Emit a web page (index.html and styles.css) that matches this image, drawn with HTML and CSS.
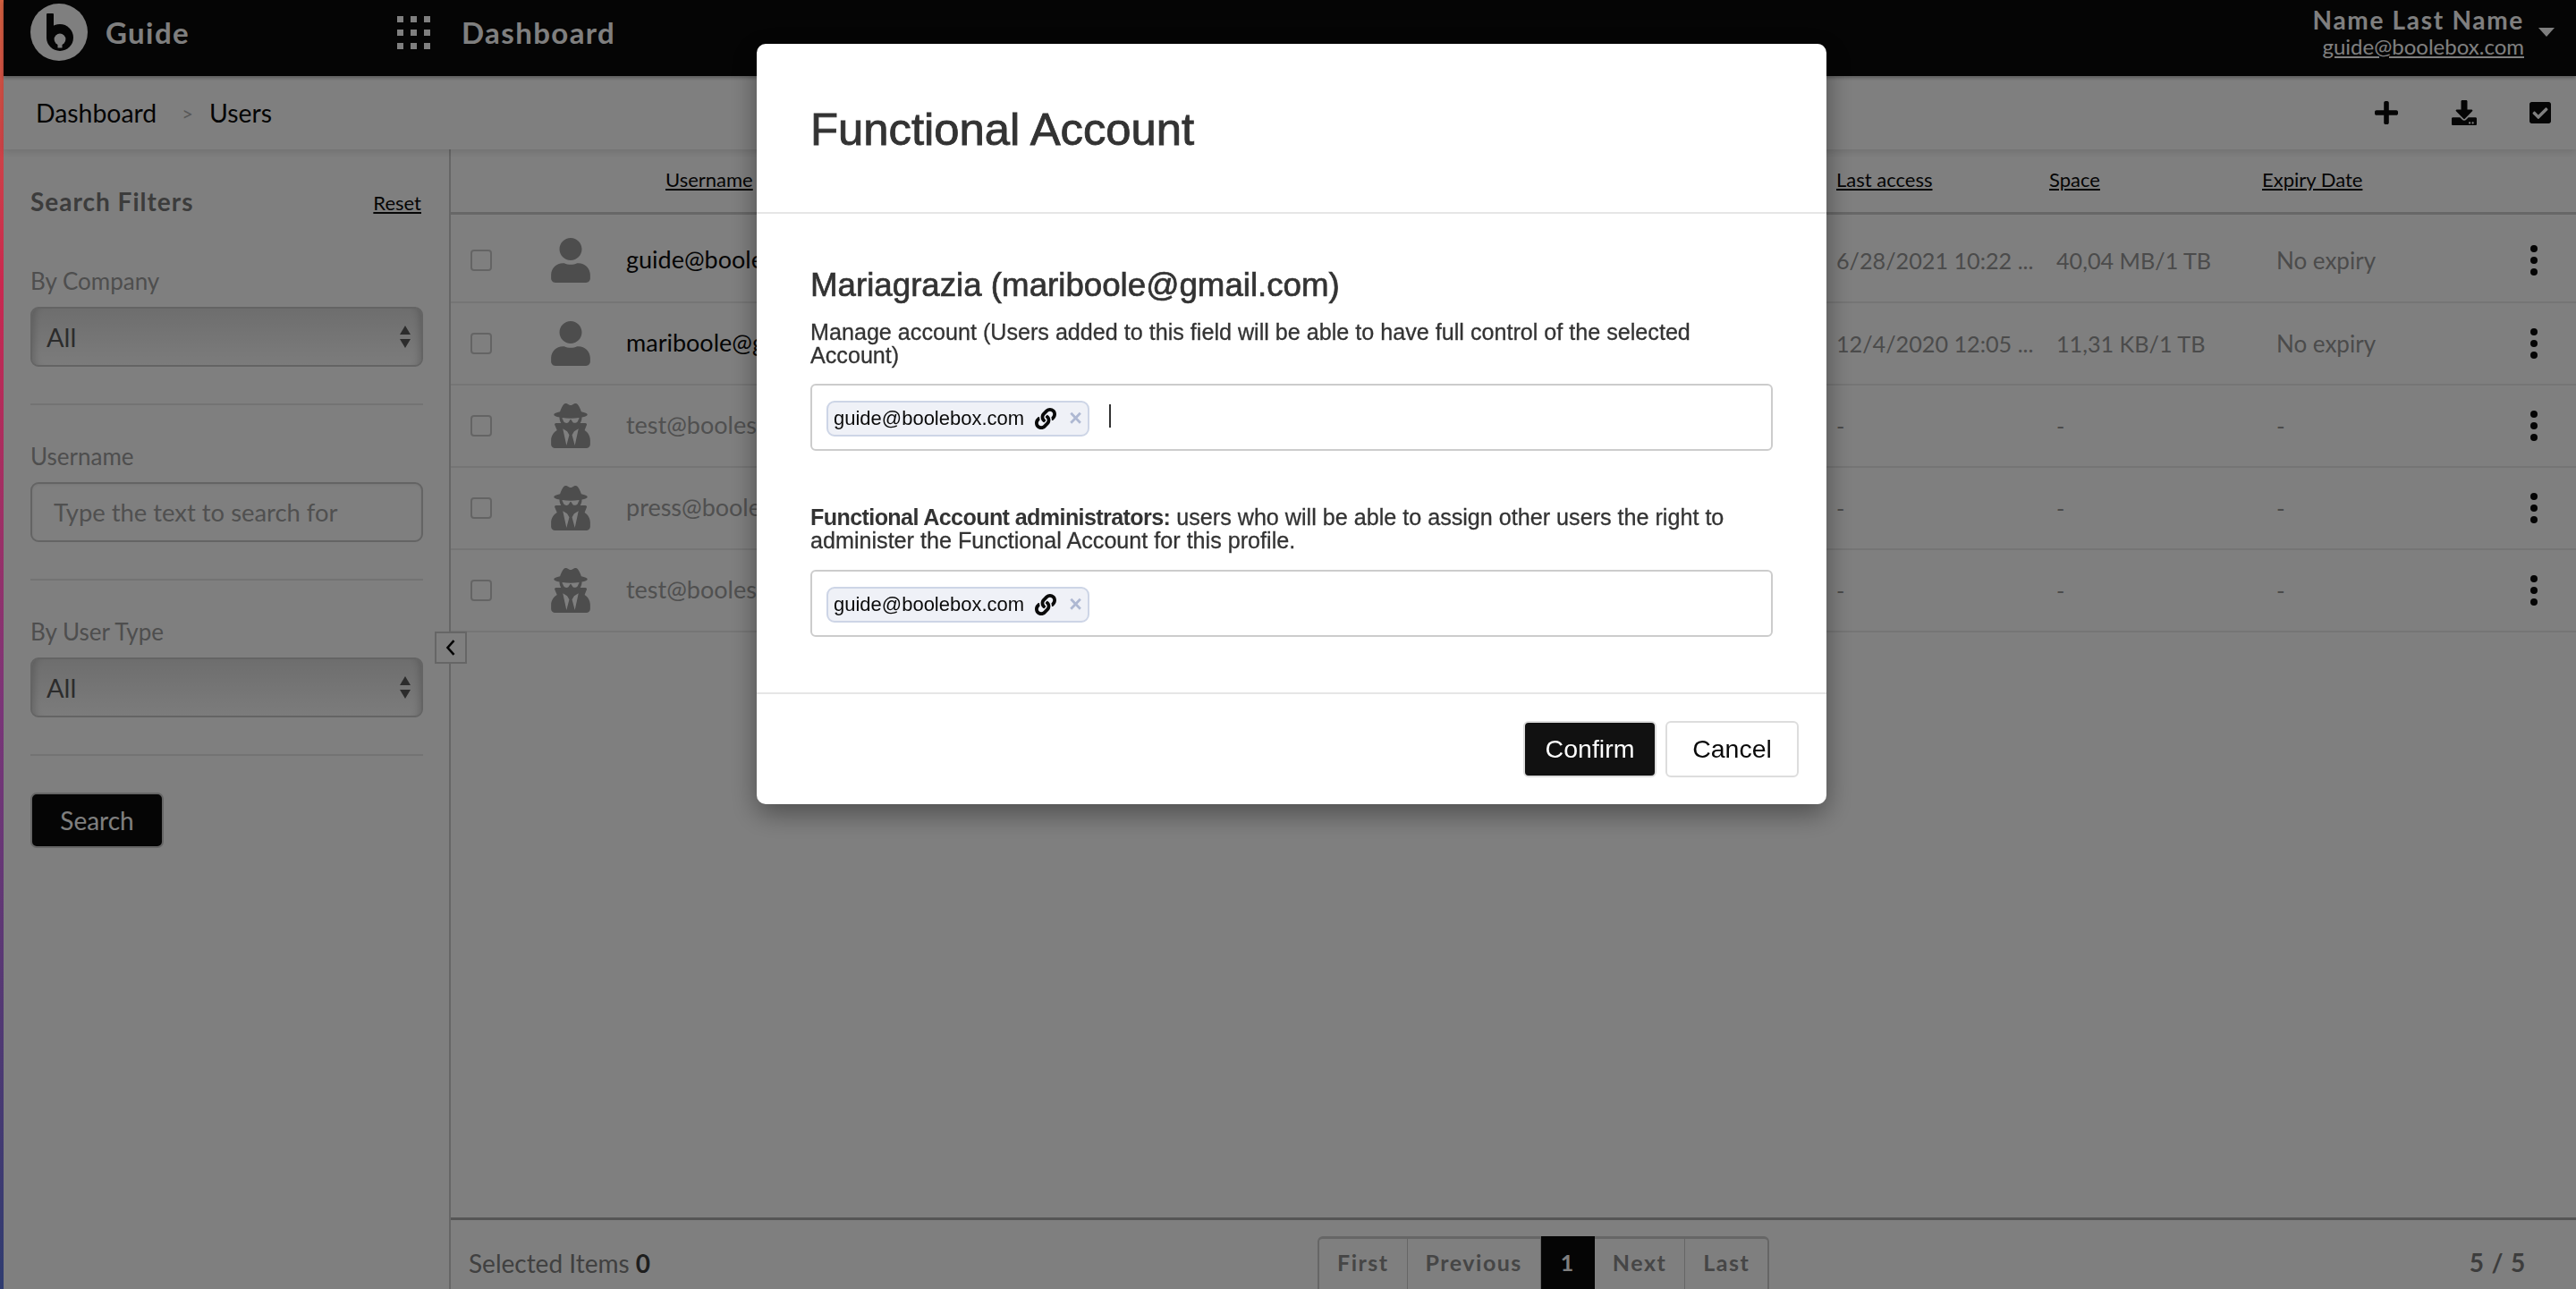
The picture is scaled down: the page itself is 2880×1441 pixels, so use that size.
FILE: index.html
```html
<!DOCTYPE html>
<html lang="en">
<head>
  <meta charset="UTF-8" />
  <title>Users - Guide</title>
  <link rel="stylesheet" href="styles.css">
</head>
<body>
  <svg class="icon-defs" aria-hidden="true">
    <symbol id="i-user" viewBox="0 0 448 512"><path d="M224 256c70.7 0 128-57.3 128-128S294.7 0 224 0 96 57.3 96 128s57.3 128 128 128zm89.6 32h-16.7c-22.2 10.2-46.9 16-72.9 16s-50.6-5.8-72.9-16h-16.7C60.2 288 0 348.2 0 422.4V464c0 26.5 21.5 48 48 48h352c26.5 0 48-21.5 48-48v-41.6c0-74.2-60.2-134.4-134.4-134.4z"/></symbol>
    <symbol id="i-secret" viewBox="0 0 448 512"><path d="M383.9 308.3l23.9-62.6c4-10.5-3.7-21.7-15-21.7h-58.5c11-18.9 17.8-40.6 17.8-64v-.3c39.2-7.8 64-19.1 64-31.7 0-13.3-27.3-25.1-70.1-33-9.2-32.8-27-65.8-40.6-82.8-9.5-11.9-25.9-15.6-39.5-8.8l-27.6 13.8c-9 4.5-19.6 4.5-28.6 0L182.1 3.4c-13.6-6.8-30-3.1-39.5 8.8-13.5 17-31.4 50-40.6 82.8-42.7 7.9-70 19.7-70 33 0 12.6 24.8 23.9 64 31.7v.3c0 23.4 6.8 45.1 17.8 64H56.3c-11.5 0-19.2 11.7-14.7 22.3l25.8 60.2C27.3 329.8 0 372.7 0 422.4v44.8C0 491.9 20.1 512 44.8 512h358.4c24.7 0 44.8-20.1 44.8-44.8v-44.8c0-48.4-25.8-90.4-64.1-114.1zM176 480l-41.6-192 49.6 32 24 40-32 120zm96 0l-32-120 24-40 49.6-32L272 480zm41.7-298.5c-3.9 11.9-7 24.6-16.5 33.4-10.1 9.3-48 22.4-64-25-2.8-8.4-15.4-8.4-18.3 0-17 50.2-56 32.4-64 25-9.5-8.8-12.7-21.5-16.5-33.4-.8-2.5-6.3-5.7-6.3-5.8v-10.8c28.3 3.6 61 5.8 96 5.8s67.7-2.1 96-5.8v10.8c-.1.1-5.6 3.2-6.4 5.8z"/></symbol>
    <symbol id="i-link" viewBox="0 0 512 512"><path d="M326.612 185.391c59.747 59.809 58.927 155.698.36 214.59-.11.12-.24.25-.36.37l-67.2 67.2c-59.27 59.27-155.699 59.262-214.96 0-59.27-59.26-59.27-155.7 0-214.96l37.106-37.106c9.84-9.84 26.786-3.3 27.294 10.606.648 17.722 3.826 35.527 9.69 52.721 1.986 5.822.567 12.262-3.783 16.612l-13.087 13.087c-28.026 28.026-28.905 73.66-1.155 101.96 28.024 28.579 74.086 28.749 102.325.51l67.2-67.19c28.191-28.191 28.073-73.757 0-101.83-3.701-3.694-7.429-6.564-10.341-8.569a16.037 16.037 0 0 1-6.947-12.606c-.396-10.567 3.348-21.456 11.698-29.806l21.054-21.055c5.521-5.521 14.182-6.199 20.584-1.731a152.482 152.482 0 0 1 20.522 17.197zM467.547 44.449c-59.261-59.262-155.69-59.27-214.96 0l-67.2 67.2c-.12.12-.25.25-.36.37-58.566 58.892-59.387 154.781.36 214.59a152.454 152.454 0 0 0 20.521 17.196c6.402 4.468 15.064 3.789 20.584-1.731l21.054-21.055c8.35-8.35 12.094-19.239 11.698-29.806a16.037 16.037 0 0 0-6.947-12.606c-2.912-2.005-6.64-4.875-10.341-8.569-28.073-28.073-28.191-73.639 0-101.83l67.2-67.19c28.239-28.239 74.3-28.069 102.325.51 27.75 28.3 26.872 73.934-1.155 101.96l-13.087 13.087c-4.35 4.35-5.769 10.79-3.783 16.612 5.864 17.194 9.042 34.999 9.69 52.721.509 13.906 17.454 20.446 27.294 10.606l37.106-37.106c59.271-59.259 59.271-155.699.001-214.959z"/></symbol>
    <symbol id="i-plus" viewBox="0 0 448 512"><path d="M416 208H272V64c0-17.67-14.33-32-32-32h-32c-17.67 0-32 14.33-32 32v144H32c-17.67 0-32 14.33-32 32v32c0 17.67 14.33 32 32 32h144v144c0 17.67 14.33 32 32 32h32c17.67 0 32-14.33 32-32V304h144c17.67 0 32-14.33 32-32v-32c0-17.67-14.33-32-32-32z"/></symbol>
    <symbol id="i-download" viewBox="0 0 512 512"><path d="M216 0h80c13.3 0 24 10.7 24 24v168h87.7c17.8 0 26.7 21.5 14.1 34.1L269.7 378.3c-7.5 7.5-19.8 7.5-27.3 0L90.1 226.1c-12.6-12.6-3.7-34.1 14.1-34.1H192V24c0-13.3 10.7-24 24-24zm296 376v112c0 13.3-10.7 24-24 24H24c-13.3 0-24-10.7-24-24V376c0-13.3 10.7-24 24-24h146.7l49 49c20.1 20.1 52.5 20.1 72.6 0l49-49H488c13.3 0 24 10.7 24 24zm-124 88c0-11-9-20-20-20s-20 9-20 20 9 20 20 20 20-9 20-20zm64 0c0-11-9-20-20-20s-20 9-20 20 9 20 20 20 20-9 20-20z"/></symbol>
    <symbol id="i-check" viewBox="0 0 448 512"><path d="M400 480H48c-26.51 0-48-21.49-48-48V80c0-26.51 21.49-48 48-48h352c26.51 0 48 21.49 48 48v352c0 26.51-21.49 48-48 48zm-204.686-98.059l184-184c6.248-6.248 6.248-16.379 0-22.627l-22.627-22.627c-6.248-6.248-16.379-6.249-22.628 0L184 302.745l-69.059-69.059c-6.248-6.248-16.379-6.248-22.628 0L69.686 256.314c-6.248 6.248-6.248 16.379 0 22.627l104 104c6.249 6.25 16.379 6.25 22.628.001z"/></symbol>
  </svg>

  <div class="strip"></div>
  <div class="page">
    <header class="topbar">
      <div class="brand">
        <svg class="logo" viewBox="0 0 64 64">
          <circle cx="32" cy="32" r="32" fill="#fff"/>
          <rect x="18" y="11" width="8" height="28" rx="1" fill="#0a0a0a"/>
          <circle cx="33" cy="38" r="15" fill="#0a0a0a"/>
          <circle cx="33" cy="40" r="6.4" fill="#fff"/>
          <rect x="30.5" y="42" width="5" height="7.5" fill="#fff"/>
        </svg>
        <span>Guide</span>
      </div>
      <div class="apps">
        <div class="apps-grid"><i></i><i></i><i></i><i></i><i></i><i></i><i></i><i></i><i></i></div>
        <span>Dashboard</span>
      </div>
      <div class="account">
        <div class="account-text">
          <div class="account-name">Name Last Name</div>
          <a class="account-mail">guide@boolebox.com</a>
        </div>
        <div class="caret"></div>
      </div>
    </header>

    <div class="subbar">
      <div class="crumbs">
        <span>Dashboard</span><span class="crumb-sep">&gt;</span><span>Users</span>
      </div>
      <div class="actions">
        <svg class="act act-plus"><use href="#i-plus"/></svg>
        <svg class="act act-down"><use href="#i-download"/></svg>
        <svg class="act act-check"><use href="#i-check"/></svg>
      </div>
    </div>

    <div class="body">
      <aside class="sidebar">
        <div class="side-head">
          <span class="side-title">Search Filters</span>
          <a class="reset">Reset</a>
        </div>
        <div class="filter">
          <label>By Company</label>
          <div class="select"><span>All</span><div class="arrows"><b></b><b></b></div></div>
        </div>
        <div class="filter">
          <label>Username</label>
          <input class="text-input" placeholder="Type the text to search for">
        </div>
        <div class="filter">
          <label>By User Type</label>
          <div class="select"><span>All</span><div class="arrows"><b></b><b></b></div></div>
        </div>
        <button class="search-btn">Search</button>
        <div class="collapse">
          <svg viewBox="0 0 16 24"><path d="M12 3 4 12l8 9" fill="none" stroke="#0a0a0a" stroke-width="3"/></svg>
        </div>
      </aside>

      <main class="main">
        <div class="table">
          <div class="row head">
            <div></div><div></div>
            <div class="col-user"><a>Username</a></div>
            <div><a>Last access</a></div>
            <div><a>Space</a></div>
            <div><a>Expiry Date</a></div>
            <div></div>
          </div>

          <div class="row first">
            <div><span class="check"></span></div>
            <div><svg class="avatar"><use href="#i-user"/></svg></div>
            <div class="mail">guide@boolebox.com</div>
            <div class="cell">6/28/2021 10:22 ...</div>
            <div class="cell cell-space">40,04 MB/1 TB</div>
            <div class="cell cell-exp">No expiry</div>
            <div class="kebab"><i></i><i></i><i></i></div>
          </div>
          <div class="row">
            <div><span class="check"></span></div>
            <div><svg class="avatar"><use href="#i-user"/></svg></div>
            <div class="mail">mariboole@gmail.com</div>
            <div class="cell">12/4/2020 12:05 ...</div>
            <div class="cell cell-space">11,31 KB/1 TB</div>
            <div class="cell cell-exp">No expiry</div>
            <div class="kebab"><i></i><i></i><i></i></div>
          </div>
          <div class="row">
            <div><span class="check"></span></div>
            <div><svg class="avatar"><use href="#i-secret"/></svg></div>
            <div class="mail off">test@boolesecure.com</div>
            <div class="cell">-</div>
            <div class="cell cell-space">-</div>
            <div class="cell cell-exp">-</div>
            <div class="kebab"><i></i><i></i><i></i></div>
          </div>
          <div class="row">
            <div><span class="check"></span></div>
            <div><svg class="avatar"><use href="#i-secret"/></svg></div>
            <div class="mail off">press@boolebox.com</div>
            <div class="cell">-</div>
            <div class="cell cell-space">-</div>
            <div class="cell cell-exp">-</div>
            <div class="kebab"><i></i><i></i><i></i></div>
          </div>
          <div class="row">
            <div><span class="check"></span></div>
            <div><svg class="avatar"><use href="#i-secret"/></svg></div>
            <div class="mail off">test@boolesecure.com</div>
            <div class="cell">-</div>
            <div class="cell cell-space">-</div>
            <div class="cell cell-exp">-</div>
            <div class="kebab"><i></i><i></i><i></i></div>
          </div>
        </div>

        <footer class="foot">
          <div class="selected">Selected Items <b>0</b></div>
          <div class="pager">
            <span>First</span><span>Previous</span><span class="current">1</span><span>Next</span><span>Last</span>
          </div>
          <div class="count">5 / 5</div>
        </footer>
      </main>
    </div>
  </div>

  <div class="overlay">
    <div class="modal">
      <div class="modal-head"><h2>Functional Account</h2></div>
      <div class="modal-body">
        <h3>Mariagrazia (mariboole@gmail.com)</h3>
        <p class="hint">Manage account (Users added to this field will be able to have full control of the selected Account)</p>
        <div class="tags">
          <span class="tag">guide@boolebox.com<svg class="tag-link"><use href="#i-link"/></svg><span class="tag-x">×</span></span>
          <span class="cursor"></span>
        </div>
        <p class="hint hint-second"><strong>Functional Account administrators:</strong> users who will be able to assign other users the right to administer the Functional Account for this profile.</p>
        <div class="tags">
          <span class="tag">guide@boolebox.com<svg class="tag-link"><use href="#i-link"/></svg><span class="tag-x">×</span></span>
        </div>
      </div>
      <div class="modal-foot">
        <button class="btn btn-dark">Confirm</button>
        <button class="btn">Cancel</button>
      </div>
    </div>
  </div>
</body>
</html>
```

FILE: styles.css
```css
* { box-sizing: border-box; margin: 0; padding: 0; }
html, body { height: 100%; }
body {
  display: flex;
  height: 1441px;
  overflow: hidden;
  font-family: 'Lato', sans-serif;
  background: #fff;
  color: #0a0a0a;
}
.icon-defs { display: none; }
.strip {
  width: 4px;
  flex: none;
  position: relative;
  background: linear-gradient(180deg, #d2603f 0, #c9284f 22%, #7a3578 55%, #2f3c70 100%);
}
.page {
  flex: 1;
  min-width: 0;
  display: flex;
  flex-direction: column;
}

/* top bar */
.topbar {
  height: 85px;
  flex: none;
  display: flex;
  align-items: center;
  padding-bottom: 13px;
  background: #0a0a0a;
  color: #fff;
  font-size: 33px;
  font-weight: 700;
  letter-spacing: 1.4px;
  box-shadow: 0 2px 4px rgba(0,0,0,0.3);
  position: relative;
  z-index: 2;
}
.brand {
  width: 440px;
  padding-left: 30px;
  display: flex;
  align-items: center;
  gap: 20px;
}
.logo { width: 64px; height: 64px; display: block; }
.apps { display: flex; align-items: center; gap: 35px; }
.apps-grid {
  display: grid;
  grid-template-columns: repeat(3, 7px);
  grid-auto-rows: 7px;
  gap: 8px;
}
.apps-grid i { background: #fff; }
.account {
  margin-left: auto;
  padding-right: 24px;
  display: flex;
  align-items: center;
  gap: 16px;
  margin-top: 0;
}
.account-text { text-align: right; }
.account-name { font-size: 28px; line-height: 32px; letter-spacing: 1.7px; }
.account-mail {
  display: block;
  font-size: 24px;
  line-height: 28px;
  font-weight: 400;
  letter-spacing: 0;
  text-decoration: underline;
}
.caret {
  width: 0;
  height: 0;
  border-left: 9px solid transparent;
  border-right: 9px solid transparent;
  border-top: 10px solid #fff;
  margin-top: 0;
}

/* breadcrumb row */
.subbar {
  height: 82px;
  flex: none;
  display: flex;
  align-items: center;
  justify-content: space-between;
  padding: 0 28px 0 36px;
  box-shadow: 0 3px 8px rgba(0,0,0,0.12);
  position: relative;
  z-index: 1;
}
.crumbs { font-size: 28.4px; display: flex; align-items: center; }
.crumb-sep { color: #b0b0b0; font-size: 22px; margin: 0 18px 0 28px; }
.actions { display: flex; align-items: center; }
.act { display: block; fill: #0a0a0a; }
.act-plus { width: 26px; height: 30px; margin-right: 60px; }
.act-down { width: 28px; height: 28px; margin-right: 59px; }
.act-check { width: 24px; height: 28px; }

.body { flex: 1; min-height: 0; display: flex; }

/* filters */
.sidebar {
  width: 500px;
  flex: none;
  position: relative;
  padding: 42px 29px 0 30px;
  border-right: 2px solid #ccc;
}
.side-head {
  display: flex;
  justify-content: space-between;
  align-items: center;
  height: 34px;
  margin-bottom: 56px;
}
.side-title { font-size: 28px; font-weight: 700; color: #787878; letter-spacing: 1px; margin-top: -2px; }
.reset { font-size: 22px; text-decoration: underline; margin-right: 2px; }
.filter {
  padding-bottom: 41px;
  margin-bottom: 42px;
  border-bottom: 2px solid #e6e6e6;
}
.filter label {
  display: block;
  font-size: 26px;
  line-height: 30px;
  color: #9c9c9c;
  margin-bottom: 14px;
}
.select {
  height: 67px;
  border: 2px solid #c8c8c8;
  border-radius: 9px;
  background: linear-gradient(180deg, #dcdcdc, #f8f8f8);
  box-shadow: inset 10px 0 8px -8px rgba(0,0,0,0.18), inset -10px 0 8px -8px rgba(0,0,0,0.18);
  display: flex;
  align-items: center;
  justify-content: space-between;
  padding: 0 12px 0 16px;
  font-size: 29px;
  color: #585858;
}
.arrows { display: flex; flex-direction: column; gap: 5px; }
.arrows b {
  width: 0;
  height: 0;
  border-left: 6px solid transparent;
  border-right: 6px solid transparent;
  border-bottom: 10px solid #585858;
}
.arrows b:last-child { border-bottom: 0; border-top: 10px solid #585858; }
.text-input {
  display: block;
  width: 100%;
  height: 67px;
  border: 2px solid #c8c8c8;
  border-radius: 9px;
  padding: 0 24px;
  font: 27.4px 'Lato', sans-serif;
  background: #fff;
  box-shadow: inset 0 1px 3px rgba(0,0,0,0.08);
}
.text-input::placeholder { color: #a0a0a0; opacity: 1; }
.search-btn {
  display: block;
  width: 149px;
  height: 62px;
  margin-top: -1px;
  background: #0a0a0a;
  color: #fff;
  border: 2px solid #ccc;
  border-radius: 7px;
  font: 28px 'Lato', sans-serif;
}
.collapse {
  position: absolute;
  top: 539px;
  right: -20px;
  width: 36px;
  height: 36px;
  background: #fff;
  border: 2px solid #ccc;
  display: flex;
  align-items: center;
  justify-content: center;
}
.collapse svg { width: 14px; height: 22px; display: block; }

/* users table */
.main { flex: 1; min-width: 0; display: flex; flex-direction: column; }
.table { flex: 1; min-height: 0; }
.row {
  height: 92px;
  display: grid;
  grid-template-columns: 112px 84px 1353px 238px 238px 270px 1fr;
  align-items: center;
  border-bottom: 2px solid #eaeaea;
  font-size: 25.2px;
}
.row > div { white-space: nowrap; }
.row > div:first-child { padding-left: 22px; }
.row.first { height: 99px; padding-top: 5px; }
.row.head {
  height: 73px;
  border-bottom: 3px solid #cfcfcf;
  font-size: 22px;
  padding-bottom: 3px;
}
.row.head a { text-decoration: underline; }
.row.head .col-user { padding-left: 44px; }
.check {
  display: block;
  width: 24px;
  height: 24px;
  border: 2px solid #c9c9c9;
  border-radius: 4px;
}
.avatar { display: block; width: 44px; height: 50px; fill: #9a9a9a; }
.mail { font-size: 27px; margin-top: -4px; }
.mail.off { color: #a0a0a0; }
.cell { color: #969696; margin-top: -1px; }
.cell-space { padding-left: 8px; }
.cell-exp { padding-left: 16px; font-size: 26px; }
.kebab {
  display: flex;
  flex-direction: column;
  align-items: center;
  gap: 5px;
  width: 8px;
  margin-left: 30px;
}
.kebab i { width: 8px; height: 8px; border-radius: 50%; background: #0a0a0a; }

.foot {
  height: 80px;
  flex: none;
  border-top: 3px solid #aaa;
  display: grid;
  grid-template-columns: 969px auto 1fr;
  align-items: start;
  padding-top: 18px;
}
.selected { padding-left: 20px; padding-top: 13px; font-size: 28px; color: #808080; }
.selected b { font-weight: 700; color: #3c3c3c; }
.pager {
  display: flex;
  height: 70px;
  border: 2px solid #ccc;
  border-top-width: 3px;
  border-radius: 6px;
  font-size: 25px;
  font-weight: 700;
  letter-spacing: 1.5px;
  color: #8c8c8c;
}
.pager span {
  display: flex;
  align-items: flex-start;
  padding: 11px 20px 0;
  border-right: 1px solid #ccc;
}
.pager span:last-child { border-right: 0; }
.pager .current { background: #0a0a0a; color: #fff; margin: -3px 0 0; padding: 14px 22px 0; border: 0; }
.count {
  justify-self: end;
  padding: 12px 56px 0 0;
  font-size: 28px;
  font-weight: 700;
  letter-spacing: 0.8px;
  color: #7a7a7a;
}

/* modal */
.overlay {
  position: fixed;
  inset: 0 0 0 4px;
  z-index: 10;
  background: rgba(0,0,0,0.5);
  display: flex;
  justify-content: center;
  align-items: flex-start;
  padding: 49px 0 0 4px;
  font-family: 'Liberation Sans', Arial, sans-serif;
}
.modal {
  width: 1196px;
  height: 850px;
  background: #fff;
  border-radius: 10px;
  box-shadow: 0 10px 30px rgba(0,0,0,0.4);
  display: flex;
  flex-direction: column;
  color: #333;
}
.modal-head {
  height: 190px;
  flex: none;
  padding: 0 60px;
  display: flex;
  align-items: center;
  border-bottom: 2px solid #e6e6e6;
}
.modal-head h2 { font-size: 50.8px; font-weight: 400; -webkit-text-stroke: 0.9px #333; margin-top: 2px; }
.modal-body { flex: 1; padding: 58px 60px 0; }
.modal-body h3 { font-size: 36.7px; font-weight: 400; line-height: 44px; -webkit-text-stroke: 0.7px #333; }
.hint { font-size: 25.15px; line-height: 26px; margin-top: 17px; -webkit-text-stroke: 0.3px #333; }
.hint strong { font-weight: 700; letter-spacing: -0.63px; -webkit-text-stroke: 0; }
.hint-second { margin-top: 61px; }
.tags {
  height: 75px;
  margin-top: 19px;
  border: 2px solid #ccc;
  border-radius: 6px;
  display: flex;
  align-items: center;
  padding: 2px 16px 0;
}
.hint-second + .tags { margin-top: 20px; }
.tag {
  height: 40px;
  display: flex;
  align-items: center;
  background: #eff1f7;
  border: 2px solid #cdd5e6;
  border-radius: 9px;
  padding: 0 6px;
  font-size: 22px;
  color: #0a0a0a;
  white-space: nowrap;
}
.tag-link { width: 24px; height: 24px; fill: #0a0a0a; margin-left: 12px; display: block; }
.tag-x { font-size: 25px; font-weight: 700; color: #aeb8d2; margin-left: 14px; }
.cursor { width: 2px; height: 26px; background: #333; margin: -6px 0 0 22px; }
.modal-foot {
  height: 125px;
  flex: none;
  border-top: 2px solid #e6e6e6;
  display: flex;
  justify-content: flex-end;
  align-items: flex-start;
  gap: 10px;
  padding: 30px 31px 0 0;
}
.btn {
  width: 149px;
  height: 63px;
  border: 2px solid #ddd;
  border-radius: 6px;
  background: #fff;
  color: #0a0a0a;
  font: 28.5px 'Liberation Sans', Arial, sans-serif;
}
.btn-dark { background: #111; color: #fff; }
```
